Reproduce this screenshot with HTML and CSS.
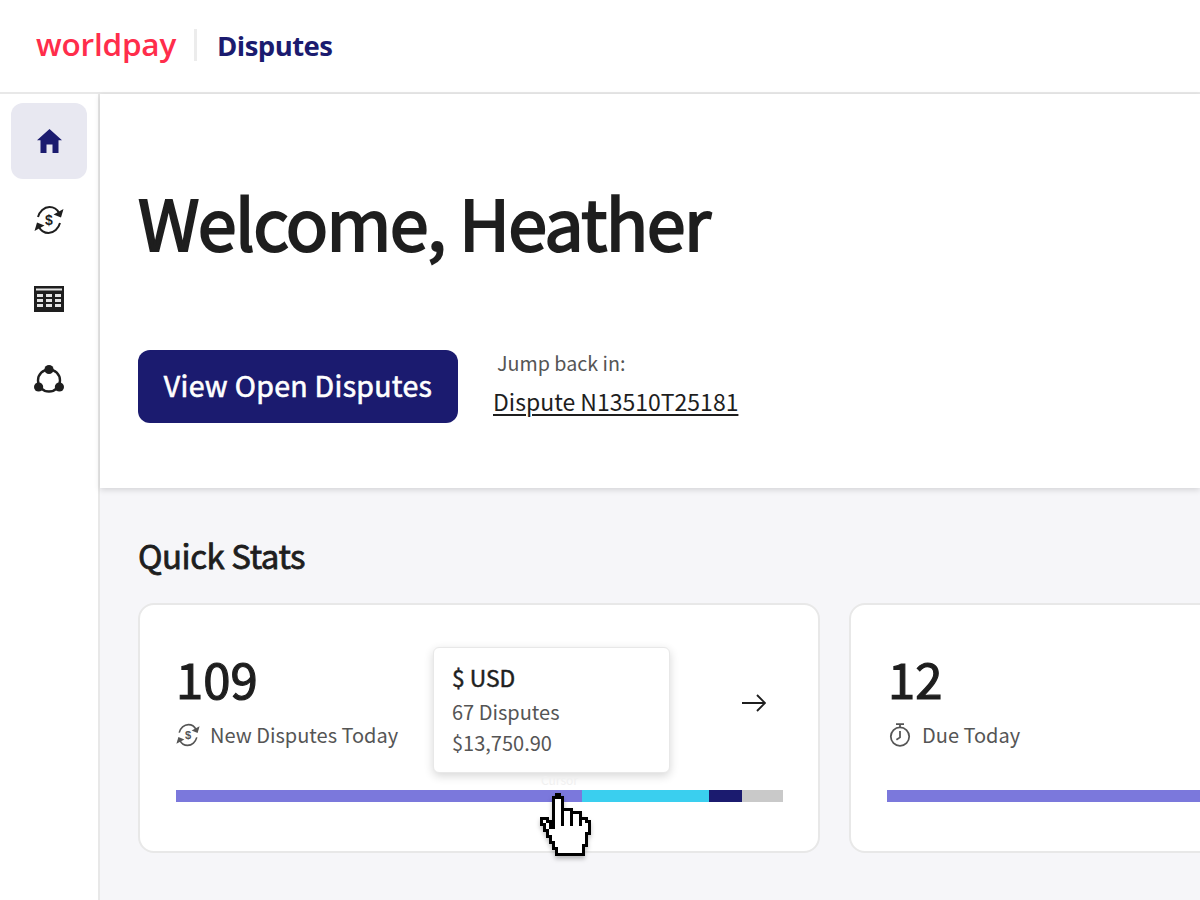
FILE: index.html
```html
<!DOCTYPE html>
<html lang="en">
<head>
<meta charset="utf-8">
<title>Worldpay Disputes</title>
<link rel="stylesheet" href="styles.css">
</head>
<body>
<header class="topbar">
  <span class="logo">worldpay</span>
  <span class="divider"></span>
  <span class="product">Disputes</span>
</header>
<div class="shell">
  <nav class="sidenav">
    <a class="navitem active">
      <svg class="ico-home" viewBox="0 0 25 24"><path d="M12.5 0L25 11.2H21.5V24H15.5V15.5H9.5V24H3.5V11.2H0Z" fill="currentColor"/></svg>
    </a>
    <a class="navitem">
      <svg class="ico" viewBox="0 0 30 30">
        <path d="M4 12C5.5 6.5 10 2 15.5 2C19.5 2 23 4 25 8" fill="none" stroke="currentColor" stroke-width="2"/>
        <path d="M29.5 4L27 12.5L19.5 9.5Z" fill="currentColor"/>
        <path d="M26 18C24.5 23.5 20 28 14.5 28C10.5 28 7 26 5 22" fill="none" stroke="currentColor" stroke-width="2"/>
        <path d="M.5 26L3 17.5L10.5 20.5Z" fill="currentColor"/>
        <text x="15" y="20" text-anchor="middle" class="dollar">$</text>
      </svg>
    </a>
    <a class="navitem">
      <svg class="ico" viewBox="0 0 30 26"><rect width="30" height="26" fill="#1e1e1e"/><rect x="2" y="2.5" width="26" height="2" fill="#e4e4e4"/><g fill="#e4e4e4"><rect x="3" y="8" width="6" height="3"/><rect x="12" y="8" width="6" height="3"/><rect x="21" y="8" width="6" height="3"/><rect x="3" y="13" width="6" height="3"/><rect x="12" y="13" width="6" height="3"/><rect x="21" y="13" width="6" height="3"/><rect x="3" y="18" width="6" height="3"/><rect x="12" y="18" width="6" height="3"/><rect x="21" y="18" width="6" height="3"/></g></svg>
    </a>
    <a class="navitem">
      <svg class="ico" viewBox="0 0 30 30"><circle cx="15" cy="17.5" r="11" fill="none" stroke="#1e1e1e" stroke-width="2.4"/><circle cx="15" cy="6.5" r="4.6" fill="#1e1e1e"/><circle cx="4.6" cy="24" r="4.6" fill="#1e1e1e"/><circle cx="25.4" cy="24" r="4.6" fill="#1e1e1e"/></svg>
    </a>
  </nav>
  <main class="content">
    <section class="hero">
      <h1>Welcome, Heather</h1>
      <div class="actions">
        <a class="cta">View Open Disputes</a>
        <div class="jump">
          <span class="jump-label">Jump back in:</span>
          <a class="jump-link">Dispute N13510T25181</a>
        </div>
      </div>
    </section>
    <section class="stats">
      <h2>Quick Stats</h2>
      <div class="cards">
        <article class="card first">
          <div class="num">109</div>
          <div class="label"><svg class="ico-sm" viewBox="0 0 30 30">
            <path d="M4 12C5.5 6.5 10 2 15.5 2C19.5 2 23 4 25 8" fill="none" stroke="currentColor" stroke-width="2"/>
            <path d="M29.5 4L27 12.5L19.5 9.5Z" fill="currentColor"/>
            <path d="M26 18C24.5 23.5 20 28 14.5 28C10.5 28 7 26 5 22" fill="none" stroke="currentColor" stroke-width="2"/>
            <path d="M.5 26L3 17.5L10.5 20.5Z" fill="currentColor"/>
            <text x="15" y="20" text-anchor="middle" class="dollar">$</text>
          </svg>New Disputes Today</div>
          <svg class="arrow" viewBox="0 0 24 18"><path d="M0 9H23M15 1L23 9L15 17" fill="none" stroke="#1e1e1e" stroke-width="1.9"/></svg>
          <div class="bar">
            <span class="seg s1"></span><span class="seg s2"></span><span class="seg s3"></span><span class="seg s4"></span>
          </div>
          <div class="tip">
            <div class="tip-title">$ USD</div>
            <div class="tip-line">67 Disputes</div>
            <div class="tip-line">$13,750.90</div>
          </div>
          <span class="cursor-label">Cursor</span>
          <svg class="hand" viewBox="0 0 17 21">
            <path d="M5.5 .5H6.5V1.5H7.5V5.5H10.5V6.5H13.5V8.5H15.5V9.5H16.5V13.5H15.5V17.5H14.5V20.5H5.5V18.5H4.5V16.5H3.5V14.5H2.5V12.5H1.5V10.5H.5V8.5H2.5V9.5H3.5V11.5H4.5V1.5H5.5Z" fill="#fff" stroke="#000" stroke-width="1"/>
            <path d="M7.5 5V11M10.5 6V11M13.5 8V11" fill="none" stroke="#000" stroke-width="1"/>
          </svg>
        </article>
        <article class="card second">
          <div class="num">12</div>
          <div class="label"><svg class="ico-sm" viewBox="0 0 30 30"><circle cx="15" cy="17" r="11.5" fill="none" stroke="currentColor" stroke-width="2.2"/><path d="M10 1.5H20M15 2V5.5M15 10V18L10.5 21" fill="none" stroke="currentColor" stroke-width="2.2"/></svg>Due Today</div>
          <div class="bar">
            <span class="seg s1 wide"></span>
          </div>
        </article>
      </div>
    </section>
  </main>
</div>
</body>
</html>
```

FILE: styles.css
```css
* { box-sizing: border-box; }
html, body { margin: 0; height: 900px; overflow: hidden; }
body {
  background: #fff;
  color: #1e1e1e;
  font-family: "Noto Sans CJK JP", "Source Sans Pro", "Open Sans", sans-serif;
}
.dollar { font: 700 14px "Liberation Sans", sans-serif; fill: currentColor; }

.topbar {
  height: 94px;
  border-bottom: 2px solid #e8e8e8;
  display: flex;
  align-items: center;
  padding-left: 36px;
}
.logo {
  font-family: "Open Sans", sans-serif;
  font-weight: 600;
  font-size: 31.5px;
  line-height: 40px;
  color: #ff2d4b;
  letter-spacing: -0.2px;
  margin-top: -4px;
}
.divider {
  width: 3px;
  height: 32px;
  background: #ececec;
  margin: -2px 20px 0 18px;
}
.product {
  font-family: "Open Sans", sans-serif;
  font-weight: 700;
  font-size: 27.5px;
  line-height: 32px;
  letter-spacing: -0.55px;
  color: #1b1b6f;
}

.shell { display: flex; height: 806px; }
.sidenav {
  width: 100px;
  flex: none;
  border-right: 2px solid #e8e8e8;
  padding: 9px 11px;
  display: flex;
  flex-direction: column;
  gap: 3px;
  color: #1e1e1e;
}
.navitem {
  width: 76px;
  height: 76px;
  border-radius: 12px;
  display: flex;
  align-items: center;
  justify-content: center;
}
.navitem.active { background: #e8e8f1; color: #1b1b6f; }
.ico-home { width: 25px; height: 24px; }
.ico { width: 30px; height: 30px; }

.content { flex: 1; min-width: 0; background: #f6f6f9; }
.hero {
  height: 394px;
  background: #fff;
  padding: 79px 38px 0;
  box-shadow: 0 2px 6px rgba(0, 0, 0, .14);
  position: relative;
}
h1 {
  margin: 0;
  font-size: 70px;
  line-height: 96px;
  font-weight: 400;
  letter-spacing: -1.6px;
  -webkit-text-stroke: 2px #1e1e1e;
}
.actions { display: flex; align-items: center; margin-top: 81px; gap: 35px; }
.cta {
  width: 320px;
  height: 73px;
  border-radius: 12px;
  background: #1b1b6f;
  color: #fff;
  font-size: 28.5px;
  font-weight: 400;
  letter-spacing: .3px;
  -webkit-text-stroke: .6px #fff;
  display: flex;
  align-items: center;
  justify-content: center;
  padding-bottom: 5px;
}
.jump { display: flex; flex-direction: column; gap: 9px; margin-top: -8px; }
.jump-label { font-size: 19.7px; line-height: 28px; color: #555; padding-left: 4px; }
.jump-link { font-size: 23px; line-height: 30px; text-decoration: underline; text-underline-offset: 3px; }

.stats { padding: 43px 0 0 38px; }
h2 {
  margin: 0 0 24px;
  font-size: 33px;
  line-height: 48px;
  font-weight: 400;
  letter-spacing: -.45px;
  -webkit-text-stroke: .8px #1e1e1e;
}
.cards { display: flex; gap: 29px; }
.card {
  flex: none;
  width: 682px;
  height: 250px;
  background: #fff;
  border: 2px solid #e8e8e8;
  border-radius: 16px;
  padding: 43px 36px 0;
  position: relative;
}
.second { padding-left: 37px; }
.num { font-size: 49px; line-height: 60px; font-weight: 400; -webkit-text-stroke: 1.2px #1e1e1e; }
.label {
  display: flex;
  align-items: center;
  gap: 10px;
  font-size: 20px;
  line-height: 30px;
  color: #555;
  margin-top: 12px;
}
.ico-sm { width: 24px; height: 24px; flex: none; }
.bar { display: flex; height: 12px; position: absolute; left: 36px; top: 185px; }
.seg { display: block; height: 12px; }
.s1 { width: 406px; background: #7b78dc; }
.s2 { width: 127px; background: #3acfef; }
.s3 { width: 33px; background: #1b1b6f; }
.s4 { width: 41px; background: #c9c9c9; }
.wide { width: 400px; }
.arrow { position: absolute; left: 602px; top: 89px; width: 24px; height: 18px; }
.tip {
  position: absolute;
  left: 293px;
  top: 42px;
  width: 237px;
  height: 126px;
  background: #fff;
  border: 1px solid #e8e8e8;
  border-radius: 6px;
  box-shadow: 0 3px 10px rgba(0, 0, 0, .16);
  padding: 14px 18px;
}
.tip-title { font-size: 22.8px; line-height: 32px; font-weight: 400; -webkit-text-stroke: .5px #1e1e1e; margin-bottom: 2px; }
.tip-line { font-size: 20px; line-height: 31px; color: #555; }
.cursor-label {
  position: absolute;
  left: 401px;
  top: 168px;
  font-size: 12px;
  line-height: 14px;
  color: #f0f0f0;
}
.hand {
  position: absolute;
  left: 400px;
  top: 188px;
  width: 51px;
  height: 63px;
  shape-rendering: crispEdges;
  filter: drop-shadow(0 3px 2px rgba(0, 0, 0, .25));
}
```
